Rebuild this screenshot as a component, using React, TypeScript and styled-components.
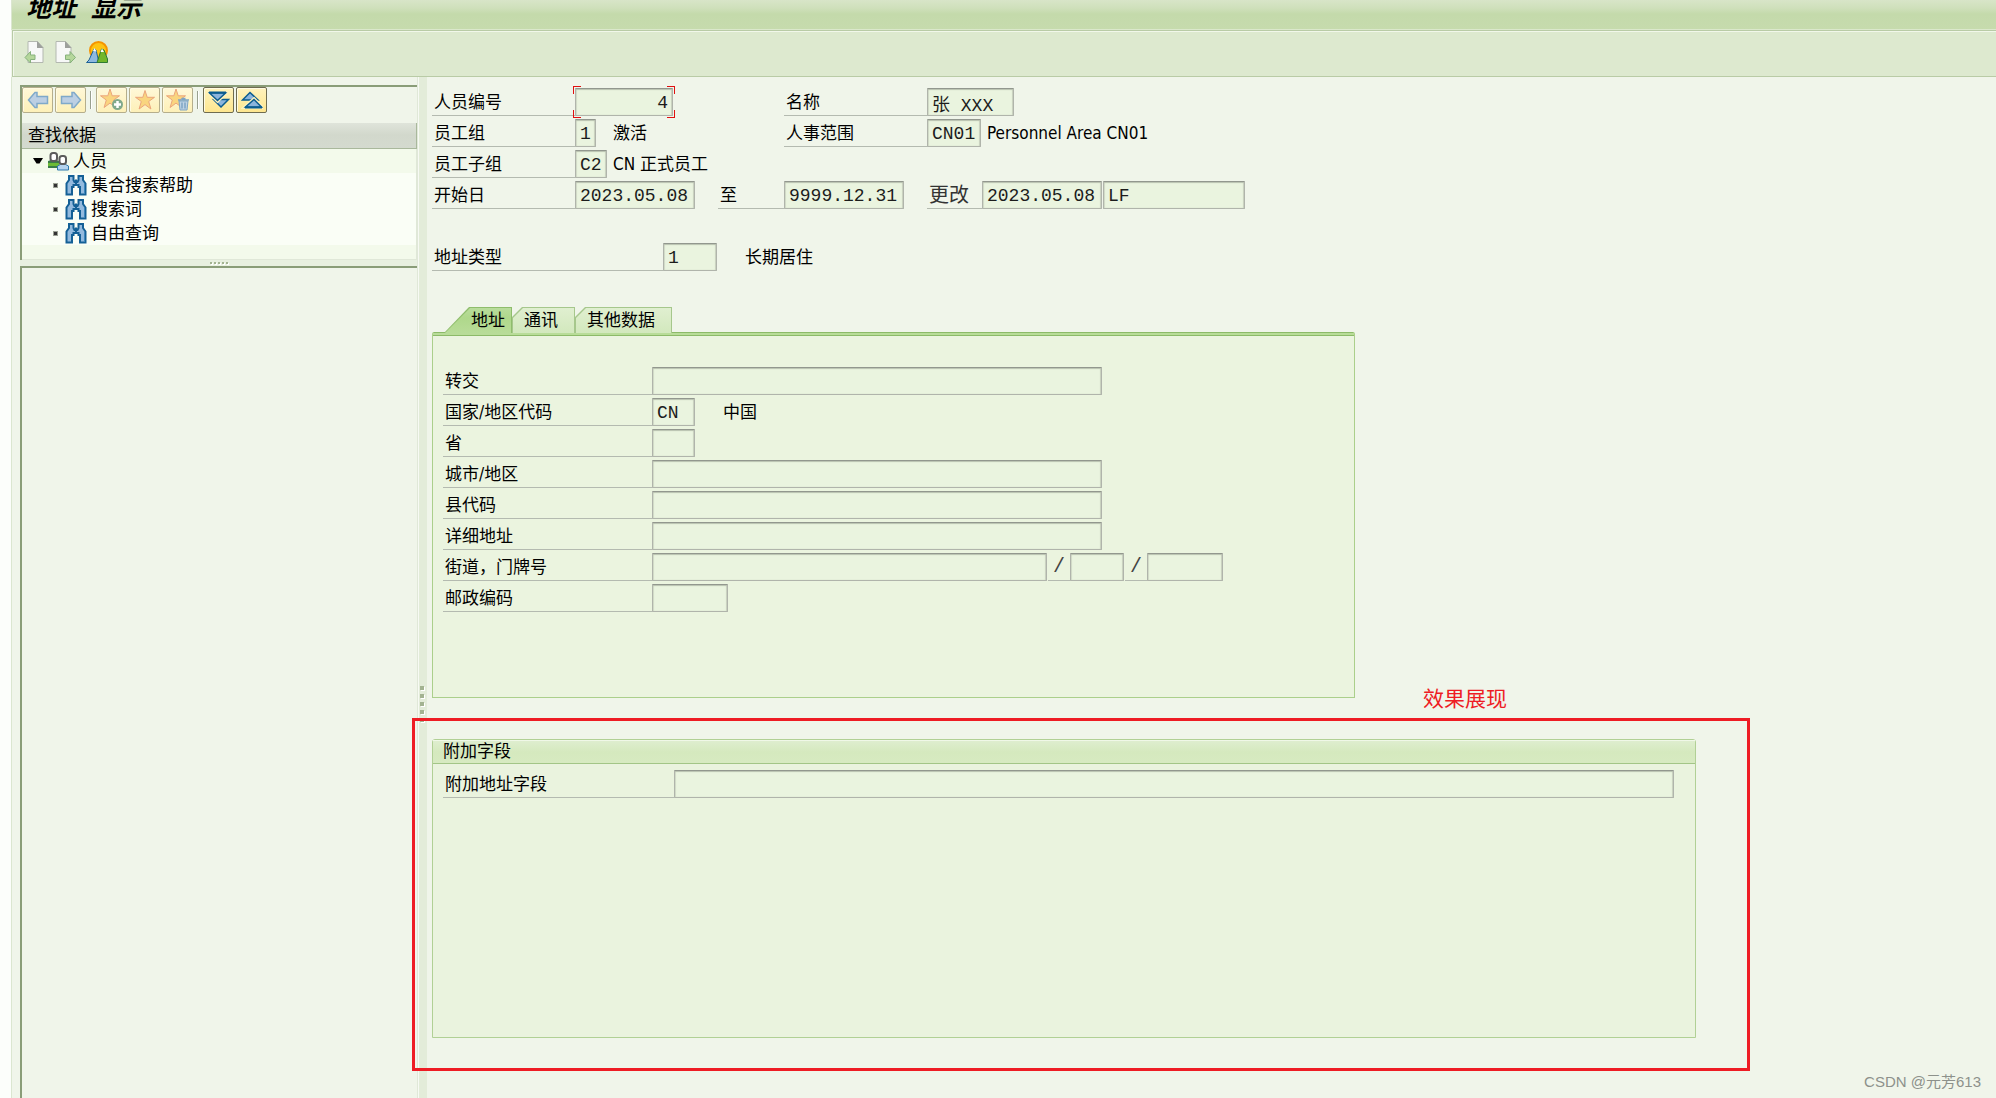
import React from "react";
import styled, { createGlobalStyle, css } from "styled-components";

const uiFont = `"DejaVu Sans Condensed", "Noto Sans CJK SC", sans-serif`;
const fieldFont = `"Liberation Mono", "Noto Sans CJK SC", monospace`;

const GlobalStyle = createGlobalStyle`
  *, *::before, *::after { box-sizing: border-box; }
  body { margin: 0; background: #f0f5ea; color: #000; font: 17px/24px ${uiFont}; }
  button { padding: 0; border: 0; background: none; font: inherit; color: inherit; cursor: pointer; }
  ul { margin: 0; padding: 0; list-style: none; }
  h1, h2 { margin: 0; font-weight: 400; }
  svg { display: block; flex: none; }
`;

const Page = styled.div`
  position: relative;
  display: flex;
  flex-direction: column;
  min-height: 100vh;
  border-left: 11px solid #fcfefb;
`;

const TitleBar = styled.header`
  height: 30px;
  flex: none;
  overflow: hidden;
  padding-left: 14px;
  border-left: 1px solid #dbe6d0;
  border-bottom: 1px solid #dbe8cc;
  background: linear-gradient(#d8e5c8 0, #cfe0bb 8px, #c4daab 14px, #c6dbad 100%);
`;

const Title = styled.h1`
  font: italic 700 25px/22px ${fieldFont};
  white-space: nowrap;
`;

const AppToolbar = styled.div`
  display: flex;
  align-items: center;
  gap: 7px;
  flex: none;
  height: 47px;
  margin-left: 1px;
  padding: 0 10px 4px;
  border: 1px solid #b9cba6;
  border-right: 0;
  box-shadow: inset 1px 1px 0 #f1f7ea;
  background: #dde9cf;
`;

const IconButton = styled.button`
  display: grid;
  place-items: center;
  width: 24px;
  height: 24px;
`;

const Body = styled.div`
  display: flex;
  flex: 1;
  border-left: 1px solid #dbe6d0;
`;

const Sidebar = styled.aside`
  display: flex;
  flex-direction: column;
  flex: none;
  width: 406px;
  padding: 8px 0 0 8px;
  border-right: 1px solid #e0e8d8;
`;

const SunkenPane = styled.section<{ $grow?: boolean }>`
  border-top: 2px solid #8a9d78;
  border-left: 2px solid #8a9d78;
  ${(p) => p.$grow && css`flex: 1;`}
`;

const TreeToolbar = styled.div`
  display: flex;
  gap: 2px;
  height: 36px;
`;

const TreeButton = styled.button<{ $active?: boolean }>`
  display: grid;
  place-items: center;
  width: 31px;
  height: 26px;
  border: 1px solid ${(p) => (p.$active ? "#6f6c50" : "#b5ae8c")};
  border-radius: 2px;
  box-shadow: inset 1px 1px 0 #fffbe2;
  background: ${(p) =>
    p.$active ? "linear-gradient(#fff3bd, #fde68f)" : "linear-gradient(#fff8d8, #fdf0b8)"};
`;

const ToolSeparator = styled.span`
  width: 2px;
  height: 18px;
  margin: 4px 2px 0;
  border-left: 1px solid #99a08f;
  background: #fff;
`;

const TreeHeader = styled.h2`
  height: 26px;
  padding-left: 6px;
  border-right: 1px solid #a9b89c;
  border-bottom: 1px solid #a9b89c;
  background: linear-gradient(#dfe4da 0, #d2d8cc 12px, #d4dacf 100%);
  font-size: 17px;
  line-height: 25px;
`;

const Tree = styled.div`
  padding-bottom: 14px;
  border-right: 1px solid #e0e8d8;
  border-bottom: 1px solid #e0e8d8;
  background: #f3faeb;
`;

const TreeRow = styled.button<{ $child?: boolean }>`
  display: flex;
  align-items: center;
  gap: 4px;
  width: 100%;
  height: 24px;
  padding-left: ${(p) => (p.$child ? 31 : 11)}px;
  background: ${(p) => (p.$child ? "#fafef6" : "transparent")};
  text-align: left;
`;

const NodeDot = styled.span`
  width: 5px;
  height: 5px;
  margin-right: 3px;
  border: 1px solid #9aa094;
  background: #333;
`;

const HorizontalGrip = styled.div`
  display: flex;
  justify-content: center;
  align-items: center;
  gap: 2px;
  height: 6px;
  background: #e8f0e0;
`;

const VerticalGrip = styled.div`
  display: flex;
  flex-direction: column;
  align-items: center;
  flex: none;
  gap: 4px;
  width: 9px;
  padding: 609px 4px 0 1px;
  border-left: 1px solid #f7faf4;
  background: #e3ecd9;
`;

const GripDot = styled.span<{ $size: number }>`
  width: ${(p) => p.$size}px;
  height: ${(p) => p.$size}px;
  background: #a3b391;
  box-shadow: 1px 1px 0 #fff;
`;

const Main = styled.main`
  display: flex;
  flex-direction: column;
  flex: 1;
  min-width: 0;
  padding: 11px 0 60px 5px;
`;

const Rows = styled.div`
  display: flex;
  flex-direction: column;
  gap: 3px;
`;

const HeaderRow = styled.div`
  display: grid;
  grid-template-columns: 352px 1fr;
`;

const Line = styled.div`
  display: flex;
  height: 28px;
`;

const TypeLine = styled(Line)`
  margin: 34px 0 36px;
`;

const Label = styled.label<{ $w: number; $after?: number }>`
  flex: none;
  width: ${(p) => p.$w}px;
  margin-left: ${(p) => p.$after ?? 0}px;
  padding-left: 2px;
  border-bottom: 1px solid #b4bab0;
  line-height: 28px;
  white-space: nowrap;
`;

const FieldLabel = styled(Label)`
  color: #333;
  font-size: 20px;
`;

const Slash = styled.span`
  width: 22px;
  margin-left: 1px;
  border-bottom: 1px solid #b4bab0;
  color: #444;
  font: 20px/28px ${fieldFont};
  text-align: center;
`;

const Field = styled.input<{ $w?: number; $right?: boolean; $after?: number }>`
  ${(p) => (p.$w ? css`flex: none; width: ${p.$w}px;` : css`flex: 1; min-width: 0;`)}
  height: 28px;
  margin: 0 0 0 ${(p) => p.$after ?? 0}px;
  padding: 2px 4px 0;
  border: 1px solid #b0b4ab;
  border-top-color: #92978e;
  border-radius: 1px;
  outline: 0;
  background: #eaf4df;
  box-shadow: inset 0 1px 1px #b9c1b0, inset 1px 0 1px #d3dcc9, inset -1px 0 1px #c9d1bf;
  color: #1c1c1c;
  font: 18px/24px ${fieldFont};
  text-align: ${(p) => (p.$right ? "right" : "left")};
`;

const Description = styled.span<{ $gap: number }>`
  padding-left: ${(p) => p.$gap}px;
  line-height: 28px;
  white-space: nowrap;
`;

const FocusFrame = styled.span`
  position: relative;
  display: flex;
`;

const Corner = styled.i<{ $v: "top" | "bottom"; $h: "left" | "right" }>`
  position: absolute;
  ${(p) => p.$v}: -2px;
  ${(p) => p.$h}: -2px;
  width: 8px;
  height: 8px;
  border: 0 solid #e01010;
  border-${(p) => p.$v}-width: 1px;
  border-${(p) => p.$h}-width: 1px;
`;

const TabArea = styled.section`
  width: 100%;
  max-width: 923px;
`;

const TabList = styled.div`
  display: flex;
  padding-left: 12px;
`;

const Tab = styled.button<{ $active?: boolean }>`
  --cut: ${(p) => (p.$active ? 25 : 10)}px;
  position: relative;
  isolation: isolate;
  height: 26px;
  margin-bottom: -1px;
  padding: 0 ${(p) => (p.$active ? 7 : 17)}px 0 ${(p) => (p.$active ? 27 : 12)}px;
  line-height: 26px;
  z-index: ${(p) => (p.$active ? 1 : 0)};

  &::before, &::after {
    content: "";
    position: absolute;
    z-index: -1;
    clip-path: polygon(0 100%, 0 ${(p) => (p.$active ? "100%" : "10px")}, var(--cut) 0, 100% 0, 100% 100%);
  }
  &::before {
    inset: 0;
    background: ${(p) => (p.$active ? "#8fbd6c" : "#a6c78c")};
  }
  &::after {
    inset: 1px 1px 0;
    background: ${(p) =>
      p.$active ? "linear-gradient(#b9dd9c, #afd88b 10px, #b8dc98)" : "linear-gradient(#e0efd0, #d2e8bd)"};
  }
`;

const TabPanel = styled.div`
  padding: 35px 10px 85px;
  border: 1px solid #abcf8b;
  border-top: 0;
  background: linear-gradient(#8cba68 0 1px, #b8dc98 1px 3px, #8cba68 3px 4px, #ebf4df 4px);
  border-radius: 2px 2px 0 0;
`;

const ExtraArea = styled.div`
  position: relative;
  display: flex;
  flex: 1;
  min-height: 260px;
  margin: 41px 300px 0 0;
`;

const Group = styled.section`
  flex: 1;
  border: 1px solid #b1d095;
  border-radius: 3px 3px 0 0;
  background: #eaf3de;
`;

const GroupTitle = styled.h2`
  height: 24px;
  margin-bottom: 6px;
  padding-left: 10px;
  border-bottom: 1px solid #a3c587;
  box-shadow: inset 0 1px 0 #f0f8e8;
  background: linear-gradient(#dfeed0, #d5e9be 12px, #d7eac1);
  font-size: 17px;
  line-height: 22px;
`;

const GroupLine = styled(Line)`
  padding: 0 21px 0 10px;
`;

const Callout = styled.div`
  position: absolute;
  inset: -21px -54px -33px -20px;
  border: 3px solid #ee1c24;
  pointer-events: none;
`;

const CalloutText = styled.span`
  position: absolute;
  top: -54px;
  right: 189px;
  color: #ee1c24;
  font: 21px/24px "Noto Sans CJK SC", sans-serif;
`;

const Watermark = styled.footer`
  position: absolute;
  right: 15px;
  bottom: 4px;
  color: #8d918b;
  font: 15px/24px "Liberation Sans", "Noto Sans CJK SC", sans-serif;
`;

const PageIcon = ({ next }: { next?: boolean }) => (
  <svg width="22" height="24" viewBox="0 0 22 24" aria-hidden="true">
    <path d="M4 1.500h9.500l5.500 6v15H4z" fill="#f7f8f7" stroke="#b3b8b0" transform={next ? "translate(-3)" : undefined} />
    <path d="M13 1v7h6.500z" fill="#9da09c" transform={next ? "translate(-3)" : undefined} />
    {next ? (
      <path d="M10.500 15h4.500v-3.500l5.500 6-5.500 5.500V19.500h-4.500z" fill="#b5d79b" stroke="#86b17c" />
    ) : (
      <path d="M11 15H6.500v-3.500l-5.500 6 5.500 5.500V19.500H11z" fill="#b5d79b" stroke="#86b17c" />
    )}
  </svg>
);

const SceneIcon = () => (
  <svg width="24" height="24" viewBox="0 0 24 24" aria-hidden="true">
    <circle cx="13.500" cy="10.500" r="8.500" fill="#fdc413" stroke="#f59400" strokeWidth="2" />
    <path d="M1.500 22.500 4 20 9 9l2 1 3 12.500z" fill="#8db8e0" stroke="#1f6296" />
    <path d="M12 22.500 16.500 9 19 10l3.500 9v3.500z" fill="#72b72b" stroke="#2e7a34" />
    <path d="M8 11l1.500-3 2 3.500zM15.500 12l1.500-3.500 2 3.500z" fill="#fff" />
  </svg>
);

const ArrowIcon = ({ right }: { right?: boolean }) => (
  <svg width="22" height="18" viewBox="0 0 22 18" aria-hidden="true">
    <path
      d={right ? "M1.500 5.500H12V1.500h2L20.500 9 14 16.500h-2V12.500H1.500z" : "M20.500 5.500H10V1.500H8L1.500 9 8 16.500h2V12.500h10.500z"}
      fill="#bccfe3"
      stroke="#7fa9c9"
      strokeWidth="1.500"
    />
  </svg>
);

const StarIcon = ({ badge }: { badge?: "add" | "delete" }) => (
  <svg width="24" height="24" viewBox="0 0 24 24" aria-hidden="true">
    <path
      d="M12 2.500 14.200 9.300H21.500L15.700 13.500 17.900 21 12 16.600 6.100 21 8.300 13.500 2.500 9.300H9.800z"
      fill="#f9d57f"
      stroke="#eba57c"
      transform={badge ? "translate(-2 -1.500)" : undefined}
    />
    {badge === "add" && (
      <>
        <circle cx="17.500" cy="16.500" r="5.500" fill="#80a98b" />
        <path d="M17.500 13v7M14 16.500h7" stroke="#fff" strokeWidth="2.500" />
      </>
    )}
    {badge === "delete" && (
      <>
        <path d="M13 13h9l-1 9h-7z" fill="#bdd2e4" stroke="#7ea5c4" />
        <path d="M12 12h11M15.500 10.500h4M16 14.500v6M19 14.500v6" stroke="#7ea5c4" strokeWidth="1.500" />
      </>
    )}
  </svg>
);

const ExpandIcon = ({ up }: { up?: boolean }) => (
  <svg width="22" height="18" viewBox="0 0 22 18" aria-hidden="true">
    {up ? (
      <g fill="#8bb4dc" stroke="#0b5c8f" strokeWidth="1.500">
        <path d="M9 1.500 17 9H1.500z" />
        <path d="M13 8.500 20.500 16h-16z" stroke="#fff3bd" strokeWidth="4" />
        <path d="M13 8.500 20.500 16h-16z" />
        <path d="M4 16.500h17" strokeWidth="2" />
      </g>
    ) : (
      <g fill="#8bb4dc" stroke="#0b5c8f" strokeWidth="1.500">
        <path d="M5.500 8.500h15L13 16z" />
        <path d="M1.500 2h16l-8 7.500z" stroke="#fff3bd" strokeWidth="4" />
        <path d="M1.500 2h16l-8 7.500z" />
        <path d="M1 1.500h17" strokeWidth="2" />
      </g>
    )}
  </svg>
);

const PeopleIcon = () => (
  <svg width="22" height="19" viewBox="0 0 22 19" aria-hidden="true">
    <path d="M1 15V9.500h11.500V15z" fill="#6dbb35" />
    <path d="M1 10V9l3-1h5l3 1v2H1zM1 14h10v2H1z" fill="#3a7d48" />
    <rect x="3.500" y="1" width="6.500" height="8" rx="2.500" fill="#fff" stroke="#5b5b5b" strokeWidth="2" />
    <path d="M10.500 18v-4l3-1.500h5l3 1.500v4z" fill="#b5d3ee" stroke="#2f78ae" />
    <rect x="12.500" y="4" width="6.500" height="8" rx="2.500" fill="#fff" stroke="#5b5b5b" strokeWidth="2" />
  </svg>
);

const BinocularsIcon = () => (
  <svg width="22" height="22" viewBox="0 0 22 22" aria-hidden="true">
    <path
      d="M1.500 20.500V9.500L4 6V2h4.500v4L9.500 8h3l1-2V2H18v4l2.500 3.500v11h-5.500v-7.500h-1.500V11h-5v2H7v7.500z"
      fill="#93bade"
      stroke="#146096"
      strokeWidth="2"
    />
    <path d="M11 5.500V10" stroke="#146096" strokeWidth="2" />
    <path d="M19.500 10v10" stroke="#3d86bd" />
  </svg>
);

const CaretIcon = () => (
  <svg width="10" height="7" viewBox="0 0 10 7" aria-hidden="true">
    <path d="M0 0h10L6.500 5.500h-3z" />
  </svg>
);

const searches = ["集合搜索帮助", "搜索词", "自由查询"];

type AddressEntry = { id: string; label: string; width: number; value?: string; note?: string };

const addressEntries: AddressEntry[] = [
  { id: "care-of", label: "转交", width: 450 },
  { id: "country", label: "国家/地区代码", width: 43, value: "CN", note: "中国" },
  { id: "province", label: "省", width: 43 },
  { id: "city", label: "城市/地区", width: 450 },
  { id: "county", label: "县代码", width: 450 },
  { id: "detail", label: "详细地址", width: 450 },
  { id: "street", label: "街道，门牌号", width: 395 },
  { id: "postcode", label: "邮政编码", width: 76 },
];

export default function App() {
  return (
    <Page>
      <GlobalStyle />
      <TitleBar>
        <Title>地址 显示</Title>
      </TitleBar>
      <AppToolbar>
        <IconButton aria-label="上一条记录"><PageIcon /></IconButton>
        <IconButton aria-label="下一条记录"><PageIcon next /></IconButton>
        <IconButton aria-label="概览"><SceneIcon /></IconButton>
      </AppToolbar>
      <Body>
        <Sidebar>
          <SunkenPane>
            <TreeToolbar>
              <TreeButton aria-label="后退"><ArrowIcon /></TreeButton>
              <TreeButton aria-label="前进"><ArrowIcon right /></TreeButton>
              <ToolSeparator />
              <TreeButton aria-label="添加收藏"><StarIcon badge="add" /></TreeButton>
              <TreeButton aria-label="收藏"><StarIcon /></TreeButton>
              <TreeButton aria-label="删除收藏"><StarIcon badge="delete" /></TreeButton>
              <ToolSeparator />
              <TreeButton $active aria-label="展开"><ExpandIcon /></TreeButton>
              <TreeButton $active aria-label="折叠"><ExpandIcon up /></TreeButton>
            </TreeToolbar>
            <TreeHeader>查找依据</TreeHeader>
            <Tree>
              <TreeRow><CaretIcon /><PeopleIcon />人员</TreeRow>
              <ul>
                {searches.map((name) => (
                  <li key={name}>
                    <TreeRow $child><NodeDot /><BinocularsIcon />{name}</TreeRow>
                  </li>
                ))}
              </ul>
            </Tree>
          </SunkenPane>
          <HorizontalGrip>
            {[0, 1, 2, 3, 4].map((n) => <GripDot key={n} $size={2} />)}
          </HorizontalGrip>
          <SunkenPane $grow />
        </Sidebar>
        <VerticalGrip>
          {[0, 1, 2, 3, 4].map((n) => <GripDot key={n} $size={4} />)}
        </VerticalGrip>
        <Main>
          <Rows>
            <HeaderRow>
              <Line>
                <Label $w={143} htmlFor="person-id">人员编号</Label>
                <FocusFrame>
                  <Field id="person-id" $w={98} $right readOnly defaultValue="4" />
                  <Corner $v="top" $h="left" />
                  <Corner $v="top" $h="right" />
                  <Corner $v="bottom" $h="left" />
                  <Corner $v="bottom" $h="right" />
                </FocusFrame>
              </Line>
              <Line>
                <Label $w={143} htmlFor="person-name">名称</Label>
                <Field id="person-name" $w={87} readOnly defaultValue="张 XXX" />
              </Line>
            </HeaderRow>
            <HeaderRow>
              <Line>
                <Label $w={143} htmlFor="emp-group">员工组</Label>
                <Field id="emp-group" $w={21} readOnly defaultValue="1" />
                <Description $gap={17}>激活</Description>
              </Line>
              <Line>
                <Label $w={143} htmlFor="area">人事范围</Label>
                <Field id="area" $w={54} readOnly defaultValue="CN01" />
                <Description $gap={6}>Personnel Area CN01</Description>
              </Line>
            </HeaderRow>
            <Line>
              <Label $w={143} htmlFor="emp-subgroup">员工子组</Label>
              <Field id="emp-subgroup" $w={32} readOnly defaultValue="C2" />
              <Description $gap={6}>CN 正式员工</Description>
            </Line>
            <HeaderRow>
              <Line>
                <Label $w={143} htmlFor="start">开始日</Label>
                <Field id="start" $w={120} readOnly defaultValue="2023.05.08" />
                <Label $w={66} $after={23} htmlFor="end">至</Label>
              </Line>
              <Line>
                <Field id="end" $w={120} readOnly defaultValue="9999.12.31" />
                <FieldLabel $w={55} $after={23} htmlFor="changed">更改</FieldLabel>
                <Field id="changed" $w={120} readOnly defaultValue="2023.05.08" />
                <Field aria-label="更改者" $w={142} $after={1} readOnly defaultValue="LF" />
              </Line>
            </HeaderRow>
          </Rows>
          <TypeLine>
            <Label $w={231} htmlFor="addr-type">地址类型</Label>
            <Field id="addr-type" $w={54} readOnly defaultValue="1" />
            <Description $gap={28}>长期居住</Description>
          </TypeLine>
          <TabArea>
            <TabList role="tablist">
              <Tab role="tab" aria-selected $active>地址</Tab>
              <Tab role="tab">通讯</Tab>
              <Tab role="tab">其他数据</Tab>
            </TabList>
            <TabPanel role="tabpanel">
              <Rows>
                {addressEntries.map((e) => (
                  <Line key={e.id}>
                    <Label $w={209} htmlFor={e.id}>{e.label}</Label>
                    <Field id={e.id} $w={e.width} readOnly defaultValue={e.value} />
                    {e.note && <Description $gap={28}>{e.note}</Description>}
                    {e.id === "street" && (
                      <>
                        <Slash>/</Slash>
                        <Field aria-label="门牌号" $w={54} readOnly />
                        <Slash>/</Slash>
                        <Field aria-label="房间号" $w={76} readOnly />
                      </>
                    )}
                  </Line>
                ))}
              </Rows>
            </TabPanel>
          </TabArea>
          <ExtraArea>
            <Group>
              <GroupTitle>附加字段</GroupTitle>
              <GroupLine>
                <Label $w={231} htmlFor="extra">附加地址字段</Label>
                <Field id="extra" readOnly />
              </GroupLine>
            </Group>
            <Callout />
            <CalloutText>效果展现</CalloutText>
          </ExtraArea>
        </Main>
      </Body>
      <Watermark>CSDN @元芳613</Watermark>
    </Page>
  );
}
